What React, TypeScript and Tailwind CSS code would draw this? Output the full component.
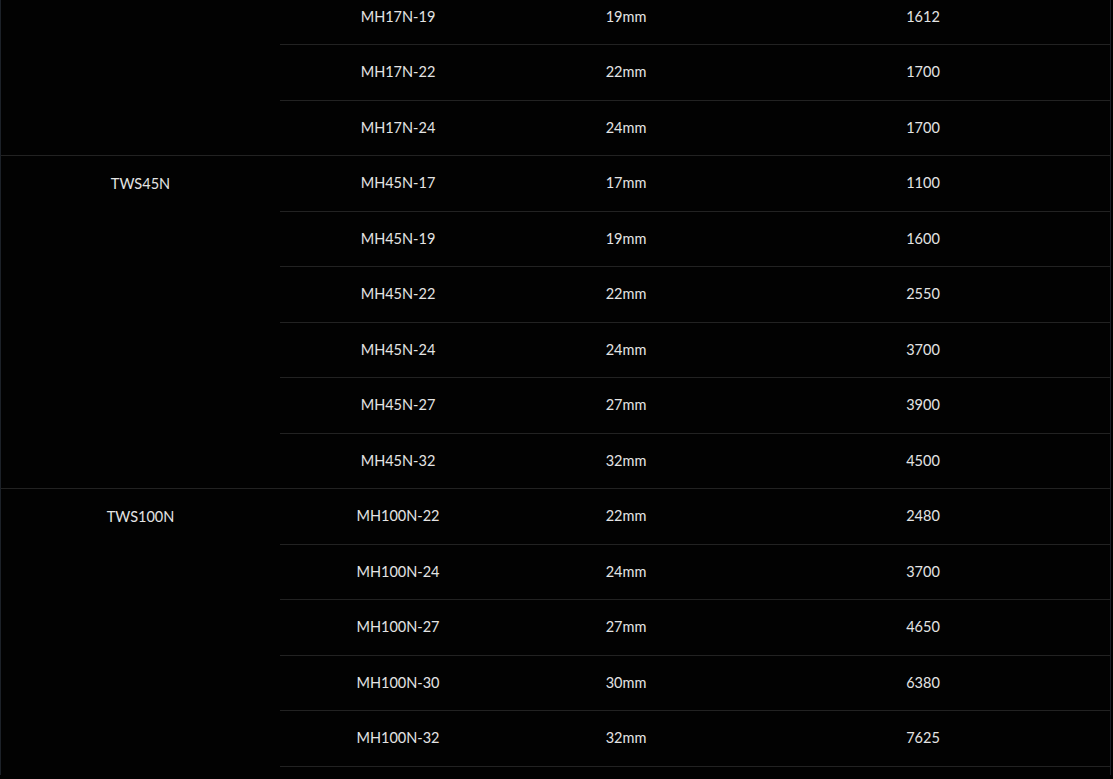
import React from 'react';

type Row = { model: string; size: string; torque: string };
type Group = { name: string; rows: Row[] };

const groups: Group[] = [
  {
    name: '',
    rows: [
      { model: 'MH17N-19', size: '19mm', torque: '1612' },
      { model: 'MH17N-22', size: '22mm', torque: '1700' },
      { model: 'MH17N-24', size: '24mm', torque: '1700' },
    ],
  },
  {
    name: 'TWS45N',
    rows: [
      { model: 'MH45N-17', size: '17mm', torque: '1100' },
      { model: 'MH45N-19', size: '19mm', torque: '1600' },
      { model: 'MH45N-22', size: '22mm', torque: '2550' },
      { model: 'MH45N-24', size: '24mm', torque: '3700' },
      { model: 'MH45N-27', size: '27mm', torque: '3900' },
      { model: 'MH45N-32', size: '32mm', torque: '4500' },
    ],
  },
  {
    name: 'TWS100N',
    rows: [
      { model: 'MH100N-22', size: '22mm', torque: '2480' },
      { model: 'MH100N-24', size: '24mm', torque: '3700' },
      { model: 'MH100N-27', size: '27mm', torque: '4650' },
      { model: 'MH100N-30', size: '30mm', torque: '6380' },
      { model: 'MH100N-32', size: '32mm', torque: '7625' },
    ],
  },
];

const App = () => {
  return (
    <div className="w-full h-screen overflow-hidden bg-[#020202] text-[14.5px] text-[#e4e4e4] font-['Lato','Liberation_Sans',sans-serif]">
      {/* tabela (rolada um pouco pra cima) */}
      <div className="w-[1111px] -mt-[10.5px] pb-[8px] border-x border-[#1c2128]">
        {groups.map((g, gi) => {
          const lastGroup = gi === groups.length - 1;
          return (
            <div key={gi} className={`flex ${!lastGroup ? 'border-b border-[#222222]' : ''}`}>
              {/* grupo */}
              <div className="w-[279px] shrink-0 h-[55.5px] flex items-center justify-center">
                {g.name}
              </div>

              {/* linhas */}
              <div className="flex-1 flex flex-col">
                {g.rows.map((r, ri) => {
                  const lastRow = ri === g.rows.length - 1;
                  return (
                    <div
                      key={r.model}
                      className={`flex items-center ${
                        lastRow && !lastGroup ? 'h-[54.5px]' : 'h-[55.5px] border-b border-[#222222]'
                      }`}
                    >
                      <div className="w-[236px] text-center">{r.model}</div>
                      <div className="w-[220px] text-center">{r.size}</div>
                      <div className="flex-1 text-center">{r.torque}</div>
                    </div>
                  );
                })}
              </div>
            </div>
          );
        })}
      </div>
    </div>
  );
};

export default App;
